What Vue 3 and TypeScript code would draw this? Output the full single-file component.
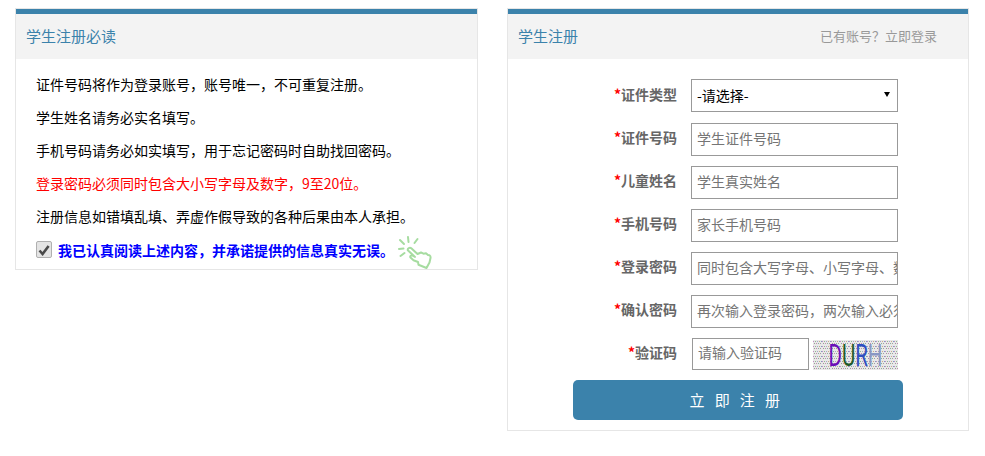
<script setup lang="ts">
const notices = [
  { text: '证件号码将作为登录账号，账号唯一，不可重复注册。' },
  { text: '学生姓名请务必实名填写。' },
  { text: '手机号码请务必如实填写，用于忘记密码时自助找回密码。' },
  { text: '登录密码必须同时包含大小写字母及数字，9至20位。', red: true },
  { text: '注册信息如错填乱填、弄虚作假导致的各种后果由本人承担。' },
]
const fields = [
  { label: '证件号码', ph: '学生证件号码' },
  { label: '儿童姓名', ph: '学生真实姓名' },
  { label: '手机号码', ph: '家长手机号码' },
  { label: '登录密码', ph: '同时包含大写字母、小写字母、数字，9至20位' },
  { label: '确认密码', ph: '再次输入登录密码，两次输入必须一致' },
]
</script>

<template>
  <div class="page">
    <section class="panel">
      <header class="head"><h2>学生注册必读</h2></header>
      <div class="notice">
        <p v-for="n in notices" :key="n.text" :class="{ red: n.red }">{{ n.text }}</p>
        <div class="agree">
          <span class="check">
            <svg width="12" height="12" viewBox="0 0 12 12"><path d="M1.5 6.5 4.6 10 10.6 2" fill="none" stroke="#4a4a4a" stroke-width="2.6" /></svg>
          </span>
          <strong>我已认真阅读上述内容，并承诺提供的信息真实无误。</strong>
          <svg class="hand" width="36" height="34" viewBox="0 0 36 34" fill="none" stroke="#a6dca0" stroke-linecap="round" stroke-linejoin="round">
            <g stroke-width="2">
              <path d="M11 2 11.500 7" />
              <path d="M3 5 7 9" />
              <path d="M2 14 6.500 13.500" />
              <path d="M3.500 21 7.500 18" />
              <path d="M20.500 4 17.500 8" />
            </g>
            <path stroke-width="2" d="M10.800 15.300c-.5-2 2-3.300 3.500-2L20.500 19l3.500-1.500 2.500 1.200 2.500-.4 2 1.700 1.500.3c1 .7 1.200 1.700 1 2.700l-1 4.500-3 5.500-8-3.200-.5-2.800-4.500-1.800-3-2.700c-.8-1.300.7-2.600 2.200-1.800l2.300 1.200z" />
          </svg>
        </div>
      </div>
    </section>

    <section class="panel">
      <header class="head">
        <h2>学生注册</h2>
        <a class="login">已有账号？立即登录</a>
      </header>
      <form class="form" @submit.prevent>
        <div class="row first">
          <label><i>*</i>证件类型</label>
          <div class="select-wrap">
            <select class="ctrl select"><option>-请选择-</option></select>
            <span class="arrow"></span>
          </div>
        </div>
        <div v-for="f in fields" :key="f.label" class="row">
          <label><i>*</i>{{ f.label }}</label>
          <input class="ctrl" :placeholder="f.ph" />
        </div>
        <div class="row">
          <label><i>*</i>验证码</label>
          <input class="ctrl code" placeholder="请输入验证码" />
          <div class="captcha">
            <svg class="noise" width="85" height="30" viewBox="0 0 85 30">
              <defs>
                <pattern id="dots" width="9" height="5" patternUnits="userSpaceOnUse">
                  <rect x="0" y="1" width="1" height="1" fill="#c48cc4" />
                  <rect x="2" y="1" width="1" height="1" fill="#8fb58f" />
                  <rect x="4" y="1" width="1" height="1" fill="#a6a6c8" />
                  <rect x="6" y="1" width="1" height="1" fill="#c9a98a" />
                  <rect x="8" y="1" width="1" height="1" fill="#7f9fc0" />
                  <rect x="1" y="3" width="1" height="1" fill="#9a9a9a" />
                  <rect x="3" y="3" width="1" height="1" fill="#c28fb0" />
                  <rect x="5" y="3" width="1" height="1" fill="#8db09a" />
                  <rect x="7" y="3" width="1" height="1" fill="#a0a0a0" />
                </pattern>
              </defs>
              <rect width="85" height="30" fill="#e8e8e8" />
              <rect width="85" height="30" fill="url(#dots)" />
            </svg>
            <div class="letters"><span class="c1">D</span><span class="c2">U</span><span class="c3">R</span><span class="c4">H</span></div>
          </div>
        </div>
        <button class="submit" type="button">立 即 注 册</button>
      </form>
    </section>
  </div>
</template>

<style scoped>
.page {
  display: flex;
  align-items: flex-start;
  gap: 29px;
  padding: 8px 0 0 15px;
  width: 985px;
  height: 456px;
  box-sizing: border-box;
  overflow: hidden;
  font-family: "Noto Sans CJK SC", "Noto Sans", sans-serif;
  font-size: 14px;
  color: #000;
}
.panel {
  width: 463px;
  box-sizing: border-box;
  border: 1px solid #e6e6e6;
  background: #fff;
}
.panel + .panel {
  width: 462px;
}
.head {
  display: flex;
  align-items: center;
  justify-content: space-between;
  height: 50px;
  box-sizing: border-box;
  padding: 0 31px 2px 10px;
  border-top: 5px solid #3b82ab;
  background: #f3f3f3;
}
.head h2 {
  margin: 0;
  font-size: 15px;
  font-weight: 400;
  color: #3b82ab;
}
.login {
  font-size: 13px;
  color: #999;
}
.notice {
  padding: 9px 20px 0;
  height: 210px;
  box-sizing: border-box;
}
.notice p {
  margin: 0;
  height: 33px;
  line-height: 33px;
  white-space: nowrap;
}
.notice .red {
  color: #f00;
}
.agree {
  display: flex;
  align-items: center;
  height: 33px;
  position: relative;
}
.check {
  display: flex;
  align-items: center;
  justify-content: center;
  width: 14px;
  height: 15px;
  margin-right: 6px;
  border: 1px solid #b0b0b0;
  border-radius: 2px;
  background: #e4e4e4;
}
.agree strong {
  color: #00f;
  font-weight: 700;
  white-space: nowrap;
}
.hand {
  position: absolute;
  left: 361px;
  top: 2px;
}
.form {
  display: flex;
  flex-direction: column;
  padding-top: 20px;
  height: 371px;
  box-sizing: border-box;
}
.row {
  display: flex;
  align-items: center;
  height: 33px;
  margin-top: 10px;
}
.row.first {
  margin-top: 0;
  margin-bottom: 1px;
}
.row label {
  width: 169px;
  margin-right: 14px;
  padding-bottom: 5px;
  text-align: right;
  font-weight: 700;
  color: #666;
  white-space: nowrap;
}
.row.first label {
  padding-bottom: 3px;
}
.row label i {
  font-style: normal;
  color: #f00;
}
.ctrl {
  width: 207px;
  height: 33px;
  box-sizing: border-box;
  padding: 0 0 4px 5px;
  border: 1px solid #999;
  border-radius: 0;
  outline: none;
  background: #fff;
  font: inherit;
  color: #000;
}
.ctrl::placeholder {
  color: #757575;
  opacity: 1;
}
.select-wrap {
  position: relative;
  width: 207px;
  height: 33px;
}
.select {
  appearance: none;
  display: block;
  padding-bottom: 2px;
}
.arrow {
  position: absolute;
  right: 8px;
  top: 13px;
  width: 0;
  height: 0;
  border-left: 3px solid transparent;
  border-right: 3px solid transparent;
  border-top: 5px solid #000;
}
.code {
  align-self: flex-start;
  width: 117px;
  height: 32px;
  margin-left: 1px;
}
.captcha {
  position: relative;
  flex: none;
  align-self: flex-start;
  width: 85px;
  height: 30px;
  margin: 2px 0 0 4px;
}
.noise {
  display: block;
}
.letters {
  position: absolute;
  inset: 0;
  display: flex;
  justify-content: center;
  transform: scaleX(0.66);
  font-family: Roboto, sans-serif;
  font-size: 31px;
  line-height: 32px;
}
.c1 { color: #6a10b8; }
.c2 { color: #1f5a2a; }
.c3 { color: #2f4fc0; }
.c4 { color: #8a97c4; }
.submit {
  width: 330px;
  height: 40px;
  margin: 9px 0 0 65px;
  padding: 0 3px 2px 0;
  border: 0;
  border-radius: 5px;
  background: #3b82ab;
  color: #fff;
  font: inherit;
  font-size: 15px;
  letter-spacing: 3.4px;
}
</style>
